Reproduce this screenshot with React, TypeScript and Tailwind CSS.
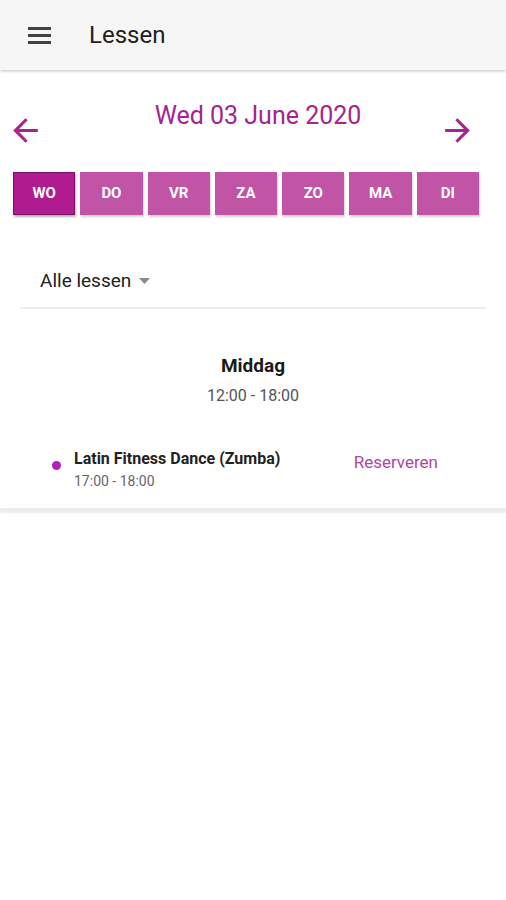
import React from "react";

const days = ["WO", "DO", "VR", "ZA", "ZO", "MA", "DI"];

function MenuIcon() {
  return (
    <svg width="23" height="17" viewBox="0 0 23 17" className="text-[#424242]">
      <rect x="0" y="0" width="23" height="3" fill="currentColor" />
      <rect x="0" y="7" width="23" height="3" fill="currentColor" />
      <rect x="0" y="14" width="23" height="3" fill="currentColor" />
    </svg>
  );
}

function Arrow({ dir }: { dir: "left" | "right" }) {
  return (
    <svg
      width="37"
      height="37"
      viewBox="0 0 24 24"
      className={`text-[#a8238f] ${dir === "right" ? "rotate-180" : ""}`}
    >
      <path
        fill="currentColor"
        d="M20 11H7.83l5.59-5.59L12 4l-8 8 8 8 1.41-1.41L7.83 13H20v-2z"
      />
    </svg>
  );
}

function DayButton({ label, active }: { label: string; active: boolean }) {
  return (
    <button
      className={`h-[43px] flex items-center justify-center text-[15px] font-bold text-white ${
        active
          ? "bg-[#b01b8f] border border-[#7b1064] shadow-[1px_2px_2px_rgba(0,0,0,0.3)]"
          : "bg-[#c254a6] shadow-[1px_2px_2px_rgba(0,0,0,0.18)]"
      }`}
    >
      {label}
    </button>
  );
}

export default function App() {
  return (
    <div className="min-h-[900px] w-full bg-white font-['Roboto',sans-serif]">
      <header className="h-[70px] bg-[#f6f6f6] flex items-center shadow-[0_1px_3px_rgba(0,0,0,0.25)] relative z-10">
        <div className="ml-[28px]">
          <MenuIcon />
        </div>
        <h1 className="ml-[38px] text-[24px] text-[#212121] leading-none">Lessen</h1>
      </header>

      <section className="bg-white shadow-[0_2px_2px_rgba(0,0,0,0.08)] border-b-[3px] border-[#ececec] pb-[18px]">
        <div className="flex items-start pt-[31px]">
          <div className="ml-[7px] mt-[11px]">
            <Arrow dir="left" />
          </div>
          <div className="flex-1 text-center pl-[33px] text-[25px] leading-[30px] text-[#a8238f]">
            Wed 03 June 2020
          </div>
          <div className="mr-[30px] mt-[11px]">
            <Arrow dir="right" />
          </div>
        </div>

        <div className="ml-[13px] mt-[23px] w-[466px] grid grid-cols-7 gap-[5px]">
          {days.map((d, i) => (
            <DayButton key={d} label={d} active={i === 0} />
          ))}
        </div>

        <div className="mt-[54px] mx-[20px] border-b-2 border-[#ededed] pb-[14px]">
          <div className="ml-[20px] flex items-center gap-[8px] text-[19px] leading-[24px] text-[#212121]">
            Alle lessen
            <svg width="11" height="6" viewBox="0 0 11 6">
              <path d="M0 0h11L5.5 6z" fill="#8a8a8a" />
            </svg>
          </div>
        </div>

        <div className="mt-[45px] text-center">
          <div className="text-[19px] leading-[24px] font-bold text-[#1a1a1a]">Middag</div>
          <div className="mt-[8px] text-[16px] leading-[20px] text-[#555]">12:00 - 18:00</div>
        </div>

        <div className="mt-[43px] flex items-start pl-[52px]">
          <span className="mt-[12px] w-[9px] h-[9px] rounded-full bg-[#b21ec2]" />
          <div className="ml-[13px] flex-1">
            <div className="text-[16px] leading-[20px] font-bold text-[#222]">
              Latin Fitness Dance (Zumba)
            </div>
            <div className="mt-[3px] text-[14px] leading-[18px] text-[#666]">17:00 - 18:00</div>
          </div>
          <button className="mt-[3px] mr-[68px] text-[17px] leading-[20px] text-[#b0479e]">
            Reserveren
          </button>
        </div>
      </section>
    </div>
  );
}
